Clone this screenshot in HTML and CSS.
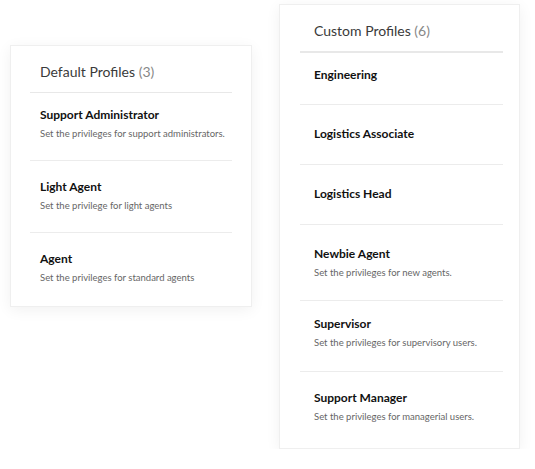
FILE: index.html
```html
<!DOCTYPE html>
<html>
<head>
	<title>Profiles</title>
	<meta charset="UTF-8">
	<meta name="viewport" content="width=device-width, initial-scale=1.0">
	<link rel="stylesheet" href="styles.css">
</head>
<body>
	<div class="profiles">
		<section class="card card-default">
			<h2 class="card-title">Default Profiles <span class="count">(3)</span></h2>
			<ul class="profile-list">
				<li class="profile">
					<h3>Support Administrator</h3>
					<p>Set the privileges for support administrators.</p>
				</li>
				<li class="profile">
					<h3>Light Agent</h3>
					<p>Set the privilege for light agents</p>
				</li>
				<li class="profile">
					<h3>Agent</h3>
					<p>Set the privileges for standard agents</p>
				</li>
			</ul>
		</section>

		<section class="card card-custom">
			<h2 class="card-title">Custom Profiles <span class="count">(6)</span></h2>
			<ul class="profile-list">
				<li class="profile plain">
					<h3>Engineering</h3>
				</li>
				<li class="profile plain">
					<h3>Logistics Associate</h3>
				</li>
				<li class="profile plain">
					<h3>Logistics Head</h3>
				</li>
				<li class="profile after-plain">
					<h3>Newbie Agent</h3>
					<p>Set the privileges for new agents.</p>
				</li>
				<li class="profile tight">
					<h3>Supervisor</h3>
					<p>Set the privileges for supervisory users.</p>
				</li>
				<li class="profile">
					<h3>Support Manager</h3>
					<p>Set the privileges for managerial users.</p>
				</li>
			</ul>
		</section>
	</div>
</body>
</html>
```

FILE: styles.css
```css
body {
	margin: 0;
	padding: 0;
	background-color: #fff;
	font-family: Lato, "Open Sans", sans-serif;
	color: #111;
}
.profiles {
	display: flex;
	align-items: flex-start;
	gap: 27px;
	padding: 4px 0 0 10px;
}
.card {
	width: 242px;
	box-sizing: border-box;
	background-color: #fff;
	border: 1px solid #efefef;
	box-shadow: 0 3px 14px rgba(0, 0, 0, 0.06);
	padding: 0 19px 2px 19px;
}
.card-default {
	margin-top: 41px;
}
.card-custom {
	width: 241px;
	padding: 0 16px 4px 20px;
}
.card-title {
	margin: 0;
	padding: 16px 0 11px 10px;
	font-size: 14px;
	line-height: 19px;
	font-weight: normal;
	color: #3a3a3a;
	border-bottom: 1px solid #e8e8e8;
}
.card-custom .card-title {
	padding-left: 14px;
	border-bottom: 2px solid #e8e8e8;
}
.card-title .count {
	color: #888;
}
.profile-list {
	list-style: none;
	margin: 0;
	padding: 0;
}
.profile {
	padding: 18px 0 19px 10px;
	border-bottom: 1px solid #ececec;
}
.card-custom .profile {
	padding-left: 14px;
	padding-bottom: 20px;
}
.profile:first-child {
	padding-top: 14px;
}
.profile:last-child {
	border-bottom: none;
}
.card-custom .profile.plain {
	padding-top: 21px;
	padding-bottom: 22px;
}
.card-custom .profile.plain:first-child {
	padding-top: 14px;
	padding-bottom: 21px;
}
.card-custom .profile.after-plain {
	padding-top: 21px;
}
.card-custom .profile.tight {
	padding-top: 15px;
	padding-bottom: 21px;
}
.profile h3 {
	margin: 0;
	font-size: 12px;
	line-height: 16px;
	font-weight: bold;
	color: #111;
}
.profile p {
	margin: 4px 0 0;
	font-size: 9.5px;
	line-height: 14px;
	color: #666;
}
```
